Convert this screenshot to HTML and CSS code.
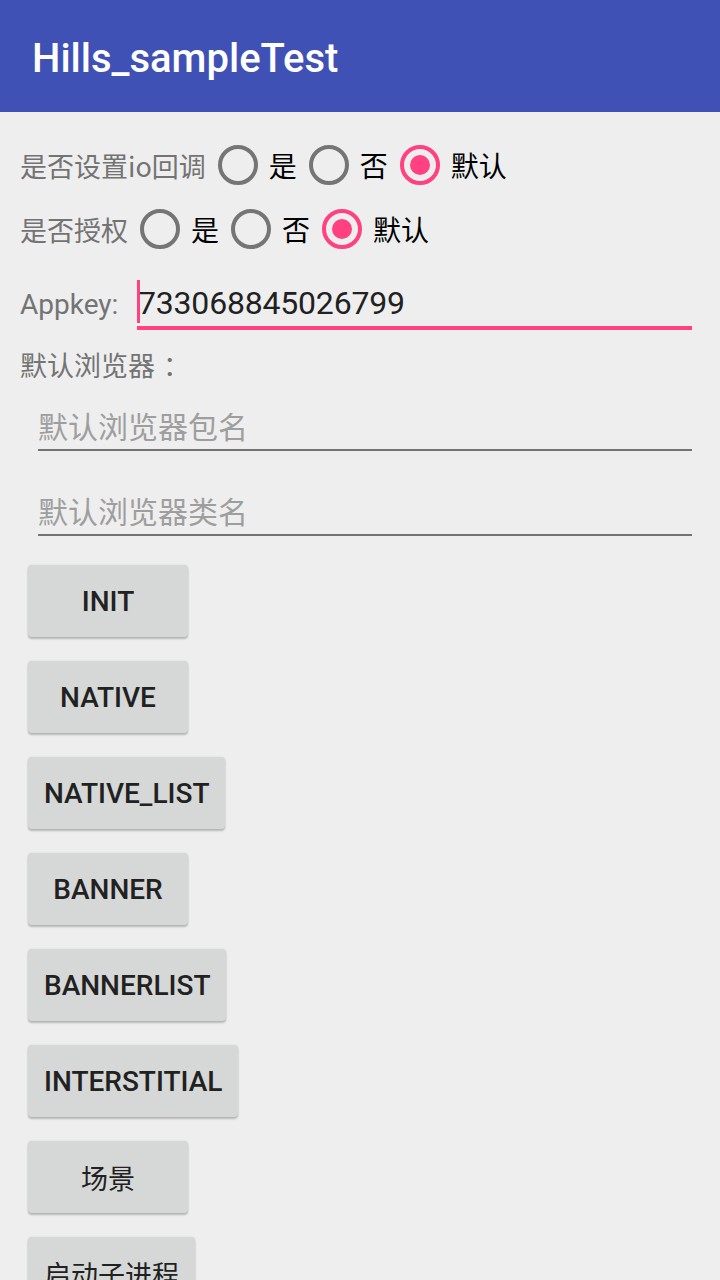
FILE: index.html
```html
<!DOCTYPE html>
<html lang="zh">
<head>
<meta charset="utf-8">
<title>Hills_sampleTest</title>
<link rel="stylesheet" href="styles.css">
</head>
<body>
<header class="appbar"><h1 class="title">Hills_sampleTest</h1></header>
<main class="content">
  <div class="radio-row">
    <span class="label">是否设置io回调</span>
    <span class="opt first"><span class="circle"></span><span class="opt-text">是</span></span>
    <span class="opt"><span class="circle"></span><span class="opt-text">否</span></span>
    <span class="opt"><span class="circle checked"></span><span class="opt-text">默认</span></span>
  </div>
  <div class="radio-row">
    <span class="label">是否授权</span>
    <span class="opt first"><span class="circle"></span><span class="opt-text">是</span></span>
    <span class="opt"><span class="circle"></span><span class="opt-text">否</span></span>
    <span class="opt"><span class="circle checked"></span><span class="opt-text">默认</span></span>
  </div>
  <div class="key-row">
    <span class="key-label">Appkey:</span>
    <div class="edit focused"><span class="value">733068845026799</span></div>
  </div>
  <div class="section-label">默认浏览器<span class="colon">：</span></div>
  <div class="edit hint-edit first-hint">默认浏览器包名</div>
  <div class="edit hint-edit second-hint">默认浏览器类名</div>
  <div class="buttons">
    <button class="btn">INIT</button>
    <button class="btn">NATIVE</button>
    <button class="btn">NATIVE_LIST</button>
    <button class="btn">BANNER</button>
    <button class="btn">BANNERLIST</button>
    <button class="btn">INTERSTITIAL</button>
    <button class="btn cjk">场景</button>
    <button class="btn cjk">启动子进程</button>
  </div>
</main>
</body>
</html>
```
FILE: styles.css
```css
html, body {
  margin: 0;
  padding: 0;
  height: 1280px;
  overflow: hidden;
}
body {
  background: #eeeeee;
  font-family: Roboto, "Noto Sans CJK SC", sans-serif;
  color: #212121;
}
.appbar {
  height: 112px;
  background: #3f51b5;
  display: flex;
  align-items: center;
  padding-left: 32px;
  box-sizing: border-box;
}
.title {
  margin: 0;
  color: #ffffff;
  font-size: 40px;
  font-weight: 500;
  line-height: 1;
  padding-top: 6px;
}
.content {
  padding: 21px 20px 0 20px;
  display: flex;
  flex-direction: column;
}
.radio-row {
  height: 64px;
  display: flex;
  align-items: center;
}
.label {
  color: #737373;
  font-size: 27px;
  font-family: "Noto Sans CJK SC", Roboto, sans-serif;
}
.opt {
  display: flex;
  align-items: center;
  margin-left: 12px;
}
.circle {
  width: 32px;
  height: 32px;
  border: 4px solid #757575;
  border-radius: 50%;
  display: flex;
  align-items: center;
  justify-content: center;
  margin-right: 11px;
}
.circle.checked {
  border-color: #ff4081;
}
.circle.checked::after {
  content: "";
  width: 20px;
  height: 20px;
  border-radius: 50%;
  background: #ff4081;
}
.opt-text {
  font-size: 28px;
  color: #000000;
  font-family: "Noto Sans CJK SC", sans-serif;
}
.key-row {
  display: flex;
  align-items: baseline;
  margin-top: 19px;
  height: 50px;
}
.key-label {
  color: #737373;
  font-size: 28px;
  line-height: 46px;
  width: 117px;
  flex: none;
}
.edit {
  position: relative;
  flex: 1;
  margin-right: 8px;
}
.edit.focused {
  height: 46px;
  line-height: 46px;
  border-bottom: 4px solid #ff4081;
  font-size: 32px;
}
.edit.focused::before {
  content: "";
  position: absolute;
  left: 0;
  top: 0;
  width: 3px;
  height: 43px;
  background: #ff4081;
}
.value {
  padding-left: 1px;
  color: #212121;
  letter-spacing: -0.2px;
}
.section-label {
  margin-top: 15px;
  height: 40px;
  line-height: 40px;
  font-size: 27px;
  color: #737373;
  font-family: "Noto Sans CJK SC", sans-serif;
}
.colon {
  padding-left: 8px;
}
.hint-edit {
  margin-left: 18px;
  height: 47px;
  line-height: 47px;
  border-bottom: 2px solid #737373;
  font-size: 30px;
  color: #9e9e9e;
  font-family: "Noto Sans CJK SC", sans-serif;
  flex: none;
}
.first-hint {
  margin-top: 17px;
}
.second-hint {
  margin-top: 36px;
}
.buttons {
  margin-top: 29px;
  margin-left: 8px;
  display: flex;
  flex-direction: column;
  align-items: flex-start;
  gap: 24px;
}
.btn {
  height: 72px;
  min-width: 160px;
  padding: 0 16px;
  border: none;
  border-radius: 4px;
  background: #d6d7d7;
  box-shadow: 0 2px 2px rgba(0, 0, 0, 0.22), 0 0 2px rgba(0, 0, 0, 0.1);
  font-family: Roboto, "Noto Sans CJK SC", sans-serif;
  font-size: 28px;
  font-weight: 500;
  color: #212121;
  flex: none;
}
.btn.cjk {
  font-weight: 400;
  font-size: 27px;
  font-family: "Noto Sans CJK SC", sans-serif;
}
```
